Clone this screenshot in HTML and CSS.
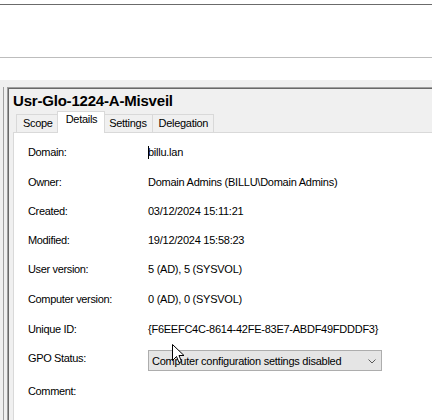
FILE: index.html
```html
<!DOCTYPE html>
<html>
<head>
<meta charset="utf-8">
<link rel="stylesheet" href="styles.css">
</head>
<body>
<div class="header">
  <div class="toolbar"></div>
</div>
<div class="main">
  <div class="sidebar"></div>
  <div class="panel">
    <div class="panel-inner">
      <div class="title">Usr-Glo-1224-A-Misveil</div>
      <div class="tabs">
        <div class="tab">Scope</div>
        <div class="tab selected">Details</div>
        <div class="tab">Settings</div>
        <div class="tab">Delegation</div>
      </div>
      <div class="page">
        <div class="grid">
          <div class="label r30">Domain:</div><div class="value r30 caret-host"><span class="caret"></span>billu.lan</div>
          <div class="label r29">Owner:</div><div class="value r29">Domain Admins (BILLU\Domain Admins)</div>
          <div class="label r29">Created:</div><div class="value r29">03/12/2024 15:11:21</div>
          <div class="label r29">Modified:</div><div class="value r29">19/12/2024 15:58:23</div>
          <div class="label r30">User version:</div><div class="value r30">5 (AD), 5 (SYSVOL)</div>
          <div class="label r30">Computer version:</div><div class="value r30">0 (AD), 0 (SYSVOL)</div>
          <div class="label r29">Unique ID:</div><div class="value r29">{F6EEFC4C-8614-42FE-83E7-ABDF49FDDDF3}</div>
          <div class="label r33">GPO Status:</div>
          <div class="value r33">
            <div class="combo">
              <span class="combo-text">Computer configuration settings disabled</span>
              <svg class="chev" width="8" height="5" viewBox="0 0 8 5"><path d="M0.5 0.5 L4 4 L7.5 0.5" fill="none" stroke="#5a5a5a" stroke-width="1"/></svg>
            </div>
          </div>
          <div class="label r30">Comment:</div><div class="value r30"></div>
        </div>
      </div>
    </div>
  </div>
</div>
<svg class="pointer" width="13" height="20" viewBox="0 0 13 20"><path d="M0.5 0.5 L0.5 16.5 L4.5 12.5 L7 18.5 L9.5 17.5 L7 11.5 L12 11.5 Z" fill="#fff" stroke="#000" stroke-width="1" stroke-linejoin="miter"/></svg>
</body>
</html>
```
FILE: styles.css
```css
html, body {
  margin: 0;
  padding: 0;
}
body {
  width: 432px;
  height: 420px;
  overflow: hidden;
  background: #fff;
  font-family: "Liberation Sans", Arial, sans-serif;
  font-size: 11px;
  color: #000;
  position: relative;
}
.header {
  height: 80px;
  box-sizing: border-box;
  padding-top: 4px;
  background: #fff;
}
.toolbar {
  height: 54px;
  box-sizing: border-box;
  border-top: 1px solid #6b6b6b;
  border-bottom: 1px solid #bdbdbd;
}
.main {
  display: flex;
  height: 340px;
  box-sizing: border-box;
  padding-top: 7px;
  background: #f0f0f0;
}
.sidebar {
  width: 4px;
  box-sizing: border-box;
  border-right: 1px solid #a0a0a0;
  margin-right: 3px;
}
.panel {
  flex: 1;
  border-top: 1px solid #a0a0a0;
  border-left: 1px solid #a0a0a0;
}
.panel-inner {
  height: 100%;
  box-sizing: border-box;
  border-top: 1px solid #696969;
  border-left: 1px solid #696969;
  padding: 3px 0 0 4px;
  display: flex;
  flex-direction: column;
}
.title {
  font-size: 15px;
  font-weight: bold;
  line-height: 17px;
  letter-spacing: -0.2px;
  height: 19px;
}
.tabs {
  display: flex;
  align-items: flex-end;
  padding-left: 3px;
  height: 21px;
  position: relative;
  z-index: 1;
}
.tab {
  height: 18px;
  box-sizing: border-box;
  padding: 0 5px 0 6px;
  border: 1px solid #d9d9d9;
  border-bottom: none;
  margin-left: -1px;
  line-height: 17px;
  letter-spacing: -0.3px;
  background: #f0f0f0;
}
.tab:first-child {
  margin-left: 0;
}
.tab.selected {
  background: #fff;
  margin-left: -2px;
  margin-right: -2px;
  padding: 0 7px 0 8px;
  line-height: 15px;
  position: relative;
  z-index: 2;
  margin-bottom: -1px;
  height: 22px;
}
.page {
  flex: 1;
  background: #fff;
  border-top: 1px solid #d9d9d9;
  border-left: 1px solid #d9d9d9;
  padding: 13px 0 0 14px;
}
.grid {
  display: grid;
  grid-template-columns: 120px 1fr;
  align-items: start;
}
.label, .value {
  line-height: 13px;
  white-space: nowrap;
}
.label {
  letter-spacing: -0.35px;
}
.value {
  letter-spacing: -0.25px;
}
.r29 { height: 29px; }
.r30 { height: 30px; }
.r33 { height: 33px; }
.caret-host {
  position: relative;
}
.caret {
  position: absolute;
  left: 0;
  top: 0;
  width: 1px;
  height: 13px;
  background: #000;
}
.combo {
  width: 234px;
  height: 21px;
  box-sizing: border-box;
  margin-top: -2px;
  border: 1px solid #adadad;
  background: #e5e5e5;
  display: flex;
  align-items: flex-start;
  justify-content: space-between;
  padding: 1px 5px 0 3px;
}
.combo-text {
  line-height: 18px;
}
.chev {
  margin-top: 7px;
}
.pointer {
  position: absolute;
  left: 172px;
  top: 344px;
}
```
